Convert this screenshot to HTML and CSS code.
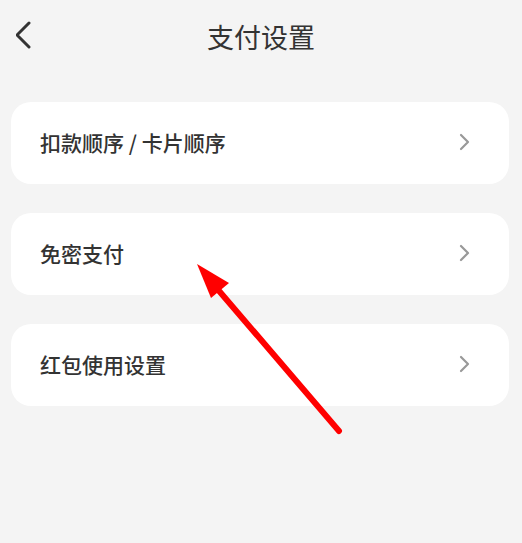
FILE: index.html
```html
<!DOCTYPE html>
<html lang="zh-CN">
<head>
<meta charset="utf-8">
<title>支付设置</title>
<link rel="stylesheet" href="styles.css">
</head>
<body>
<div class="page">
  <header class="header">
    <svg class="back" width="20" height="30" viewBox="0 0 20 30"><polyline points="13,2 1,14 13,26" fill="none" stroke="#333" stroke-width="3" stroke-linecap="round" stroke-linejoin="round"/></svg>
    <h1 class="title">支付设置</h1>
  </header>
  <main class="list">
    <div class="card"><span class="label">扣款顺序 / 卡片顺序</span><svg class="chev" width="12" height="18" viewBox="0 0 12 18"><polyline points="2,2 9,9 2,16" fill="none" stroke="#999" stroke-width="2.2" stroke-linecap="round" stroke-linejoin="round"/></svg></div>
    <div class="card"><span class="label">免密支付</span><svg class="chev" width="12" height="18" viewBox="0 0 12 18"><polyline points="2,2 9,9 2,16" fill="none" stroke="#999" stroke-width="2.2" stroke-linecap="round" stroke-linejoin="round"/></svg></div>
    <div class="card"><span class="label">红包使用设置</span><svg class="chev" width="12" height="18" viewBox="0 0 12 18"><polyline points="2,2 9,9 2,16" fill="none" stroke="#999" stroke-width="2.2" stroke-linecap="round" stroke-linejoin="round"/></svg></div>
  </main>
  <svg class="arrow" width="522" height="543" viewBox="0 0 522 543">
    <line x1="339" y1="431" x2="214" y2="285" stroke="#ff0000" stroke-width="6" stroke-linecap="round"/>
    <polygon points="197,264 229,283 211,298" fill="#ff0000"/>
  </svg>
</div>
</body>
</html>
```

FILE: styles.css
```css
html, body {
  margin: 0;
  padding: 0;
  background: #f4f4f4;
}
body {
  font-family: "Noto Sans CJK SC", "Noto Sans", sans-serif;
  color: #333;
}
.page {
  position: relative;
  width: 522px;
  height: 543px;
  overflow: hidden;
}
.header {
  position: relative;
  height: 74px;
  display: flex;
  align-items: center;
  justify-content: center;
}
.back {
  position: absolute;
  left: 16px;
  top: 21px;
}
.title {
  margin: 0;
  font-size: 27px;
  font-weight: 400;
  line-height: 74px;
  color: #333;
}
.list {
  display: flex;
  flex-direction: column;
  gap: 29px;
  padding: 28px 13px 0 11px;
}
.card {
  height: 82px;
  background: #fff;
  border-radius: 20px;
  display: flex;
  align-items: center;
  justify-content: space-between;
  padding: 0 38px 0 29px;
}
.label {
  font-size: 21px;
  font-weight: 500;
  color: #333;
  margin-top: -2px;
}
.chev {
  display: block;
  margin-top: -2px;
}
.arrow {
  position: absolute;
  left: 0;
  top: 0;
  pointer-events: none;
}
```
